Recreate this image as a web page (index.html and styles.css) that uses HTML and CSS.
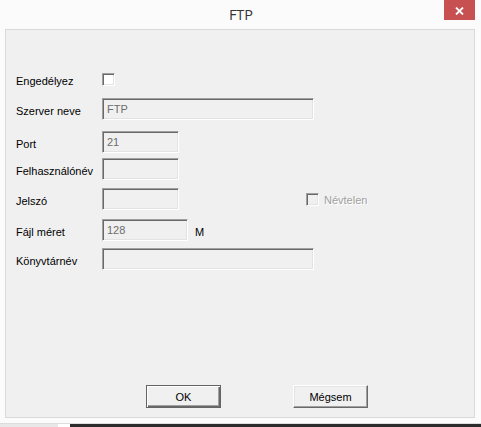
FILE: index.html
```html
<!doctype html>
<html lang="hu">
  <head>
    <meta charset="UTF-8" />
    <title>FTP</title>
    <link rel="stylesheet" href="styles.css">
  </head>
  <body>
    <div class="window">
      <div class="titlebar">
        <span class="title">FTP</span>
        <button class="close-btn" type="button" aria-label="Bezárás">
          <svg width="9" height="8" viewBox="0 0 9 8">
            <path d="M1 0.5 L8 7.5 M8 0.5 L1 7.5" stroke="#fff" stroke-width="1.8" />
          </svg>
        </button>
      </div>

      <div class="panel">
        <form class="fields">
          <div class="row">
            <label class="field-label">Engedélyez</label>
            <span class="check"></span>
          </div>

          <div class="row gap-8">
            <label class="field-label">Szerver neve</label>
            <input class="text-box wide" value="FTP" disabled />
          </div>

          <div class="row gap-11">
            <label class="field-label">Port</label>
            <input class="text-box short" value="21" disabled />
          </div>

          <div class="row gap-5">
            <label class="field-label">Felhasználónév</label>
            <input class="text-box short" value="" disabled />
          </div>

          <div class="row gap-8">
            <label class="field-label">Jelszó</label>
            <input class="text-box short" type="password" value="" disabled />
            <span class="check check-disabled anon-check"></span>
            <span class="disabled-label">Névtelen</span>
          </div>

          <div class="row gap-9">
            <label class="field-label">Fájl méret</label>
            <input class="text-box medium" value="128" disabled />
            <span class="unit">M</span>
          </div>

          <div class="row gap-7">
            <label class="field-label">Könyvtárnév</label>
            <input class="text-box wide" value="" disabled />
          </div>
        </form>

        <div class="actions">
          <button class="btn btn-default" type="button">OK</button>
          <button class="btn" type="button">Mégsem</button>
        </div>
      </div>

      <div class="taskbar"></div>
    </div>
  </body>
</html>
```

FILE: styles.css
```css
body {
  margin: 0;
  background: #fbfbfb;
  font-family: "Liberation Sans", Arial, sans-serif;
  font-size: 11px;
  color: #000;
}

.window {
  width: 481px;
  height: 427px;
  display: flex;
  flex-direction: column;
  background: #fbfbfb;
}

.titlebar {
  position: relative;
  height: 29px;
  display: flex;
  justify-content: center;
  align-items: center;
}

.title {
  font-family: "Open Sans", "Noto Sans", sans-serif;
  font-size: 14.5px;
  color: #333;
  margin-left: 1px;
  padding-bottom: 1px;
}

.close-btn {
  position: absolute;
  top: 0;
  right: 6px;
  width: 31px;
  height: 20px;
  padding: 0;
  border: none;
  background: #c75050;
  display: flex;
  justify-content: center;
  align-items: center;
}

.close-btn svg {
  display: block;
  margin-top: 1px;
}

.panel {
  height: 389px;
  margin: 0 6px 0 5px;
  border: 1px solid #d9d9d9;
  background: #f0f0f0;
  box-sizing: border-box;
  display: flex;
  flex-direction: column;
}

.fields {
  margin: 0;
  padding: 38px 0 0 10px;
}

.row {
  height: 22px;
  display: flex;
  align-items: center;
}

.gap-5 { margin-top: 5px; }
.gap-7 { margin-top: 7px; }
.gap-8 { margin-top: 8px; }
.gap-9 { margin-top: 9px; }
.gap-11 { margin-top: 11px; }

.field-label {
  width: 86px;
  flex-shrink: 0;
  padding-top: 3px;
}

.check {
  width: 13px;
  height: 13px;
  box-sizing: border-box;
  background: #fff;
  border-top: 1px solid #a0a0a0;
  border-left: 1px solid #a0a0a0;
  border-right: 1px solid #fff;
  border-bottom: 1px solid #fff;
  box-shadow: inset 1px 1px 0 #696969, inset -1px -1px 0 #e3e3e3;
}

.check-disabled {
  background: #f0f0f0;
}

.anon-check {
  margin-left: 127px;
}

.disabled-label {
  margin-left: 5px;
  color: #a0a0a0;
  text-shadow: 1px 1px 0 #fff;
  padding-top: 1px;
}

.text-box {
  height: 22px;
  box-sizing: border-box;
  margin: 0;
  padding: 0 0 0 4px;
  appearance: none;
  outline: none;
  font: inherit;
  color: #6d6d6d;
  background: #f0f0f0;
  border-top: 1px solid #a0a0a0;
  border-left: 1px solid #a0a0a0;
  border-right: 1px solid #fff;
  border-bottom: 1px solid #fff;
  box-shadow: inset 1px 1px 0 #696969, inset -1px -1px 0 #e3e3e3;
}

.wide { width: 212px; }
.short { width: 77px; }
.medium { width: 86px; }

.unit {
  margin-left: 7px;
  padding-top: 3px;
}

.actions {
  margin-top: auto;
  padding: 0 0 9px 140px;
  display: flex;
  gap: 72px;
}

.btn {
  width: 75px;
  height: 23px;
  box-sizing: border-box;
  padding: 0;
  font: inherit;
  color: #000;
  background: #f0f0f0;
  border-top: 1px solid #fff;
  border-left: 1px solid #fff;
  border-right: 1px solid #696969;
  border-bottom: 1px solid #696969;
  box-shadow: inset -1px -1px 0 #a0a0a0, inset 1px 1px 0 #e3e3e3;
}

.btn-default {
  border: 1px solid #646464;
  box-shadow: inset 1px 1px 0 #fff, inset -1px -1px 0 #696969, inset -2px -2px 0 #a0a0a0;
}

.taskbar {
  margin-top: auto;
  height: 3px;
  border-top: 1px solid #dcdcdc;
  background: linear-gradient(to right, #e8e8e8 0, #e8e8e8 58px, #fff 58px, #fff 70px, #2b2b2b 70px);
}
```
